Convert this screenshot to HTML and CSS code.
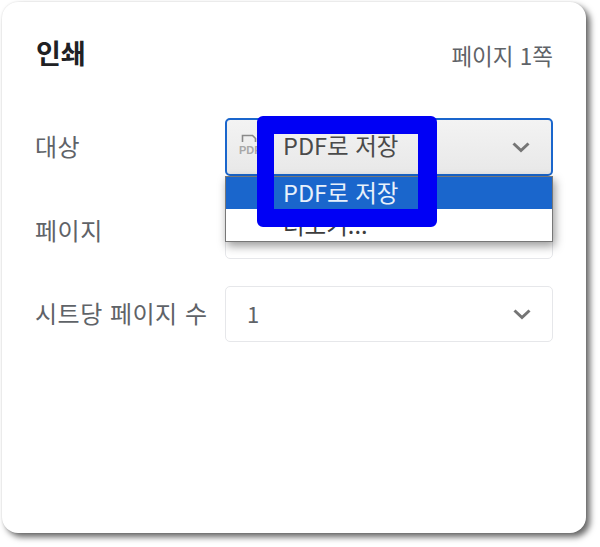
FILE: index.html
```html
<!DOCTYPE html>
<html lang="ko">
<head>
    <meta charset="UTF-8">
    <title>인쇄</title>
    <link rel="stylesheet" href="styles.css">
</head>
<body>

<div class="card">
    <div class="header">
        <h1 class="title">인쇄</h1>
        <div class="page-count">페이지 1쪽</div>
    </div>

    <div class="row row-dest">
        <div class="label">대상</div>
        <div class="dest-wrap">
            <div class="select select-open">
                <svg class="pdf-icon" width="22" height="28" viewBox="0 0 22 28">
                    <path d="M3.5 9V2.5h10l3 3V9" fill="none" stroke="#8a8a8a" stroke-width="1.6"/>
                    <text x="0" y="21" class="pdf-icon-text">PDF</text>
                </svg>
                <span class="select-text">PDF로 저장</span>
                <svg class="chevron" width="20" height="12" viewBox="0 0 20 12">
                    <path d="M2.5 2.5L10 9.5l7.5-7" fill="none" stroke="#757575" stroke-width="3"/>
                </svg>
            </div>
            <div class="menu">
                <div class="menu-item menu-item-active">PDF로 저장</div>
                <div class="menu-item">더보기...</div>
            </div>
        </div>
    </div>

    <div class="row">
        <div class="label">페이지</div>
        <div class="select"></div>
    </div>

    <div class="row">
        <div class="label">시트당 페이지 수</div>
        <div class="select">
            <span class="select-value">1</span>
            <svg class="chevron" width="20" height="12" viewBox="0 0 20 12">
                <path d="M2.5 2.5L10 9.5l7.5-7" fill="none" stroke="#757575" stroke-width="3"/>
            </svg>
        </div>
    </div>
</div>

<!-- 파란 강조 박스 -->
<div class="highlight"></div>

</body>
</html>
```

FILE: styles.css
```css
html, body {
    height: 100%;
}

body {
    margin: 0;
    padding: 2px 0 0 2px;
    box-sizing: border-box;
    background-color: white;
    font-family: "Noto Sans CJK KR", "Liberation Sans", sans-serif;
    color: #5f6368;
    position: relative;
    overflow: hidden;
}

.card {
    width: 584px;
    height: 531px;
    box-sizing: border-box;
    padding: 0 33px;
    background-color: white;
    border-radius: 16px;
    box-shadow: 4px 4px 6px rgba(0, 0, 0, 0.6), 0 0 2px rgba(0, 0, 0, 0.12);
}

.header {
    height: 116px;
    display: flex;
    justify-content: space-between;
    align-items: flex-start;
}

.title {
    margin: 31px 0 0 1px;
    font-size: 27px;
    line-height: 40px;
    font-weight: 700;
    color: #202124;
}

.page-count {
    margin-top: 37px;
    font-size: 22.5px;
    line-height: 32px;
    color: #5f6368;
}

.row {
    display: flex;
    align-items: center;
    margin-bottom: 27px;
}

.row-dest {
    margin-bottom: 27px;
}

.label {
    width: 190px;
    flex-shrink: 0;
    font-size: 24px;
    letter-spacing: 0.5px;
    line-height: 30px;
    margin-top: -3px;
    white-space: nowrap;
    color: #5f6368;
}

.dest-wrap {
    position: relative;
    width: 328px;
}

.select {
    width: 328px;
    height: 56px;
    box-sizing: border-box;
    display: flex;
    align-items: center;
    padding: 0 20px 0 21px;
    background-color: white;
    border: 1px solid #e6e7ea;
    border-radius: 5px;
    font-size: 22px;
}

.select-open {
    height: 58px;
    padding: 0 20px 0 12px;
    border: 2px solid #1a66cc;
    background: linear-gradient(#f3f3f3, #e8e8e8);
}

.pdf-icon {
    flex-shrink: 0;
}

.pdf-icon-text {
    font-family: "Liberation Sans", sans-serif;
    font-size: 11px;
    font-weight: 700;
    fill: #a8a8a8;
}

.select-text {
    margin-left: 22px;
    margin-top: -5px;
    font-size: 23.5px;
    color: #4a4a4a;
    flex: 1;
}

.select-value {
    flex: 1;
    margin-top: -3px;
    color: #5f6368;
}

.chevron {
    flex-shrink: 0;
    margin-left: auto;
}

.menu {
    position: absolute;
    top: 58px;
    left: 0;
    width: 328px;
    box-sizing: border-box;
    background-color: white;
    border: 1px solid #777;
    box-shadow: 2px 4px 9px rgba(0, 0, 0, 0.4);
}

.menu-item {
    height: 32px;
    padding-left: 57px;
    font-size: 23.5px;
    line-height: 30px;
    color: #3c3c3c;
}

.menu-item-active {
    background-color: #1a66cc;
    color: #e8f1fb;
}

.highlight {
    position: absolute;
    left: 257px;
    top: 116px;
    width: 144px;
    height: 75px;
    border: solid #0000f5;
    border-width: 18px 19px 18px 17px;
    border-radius: 6px;
}
```
